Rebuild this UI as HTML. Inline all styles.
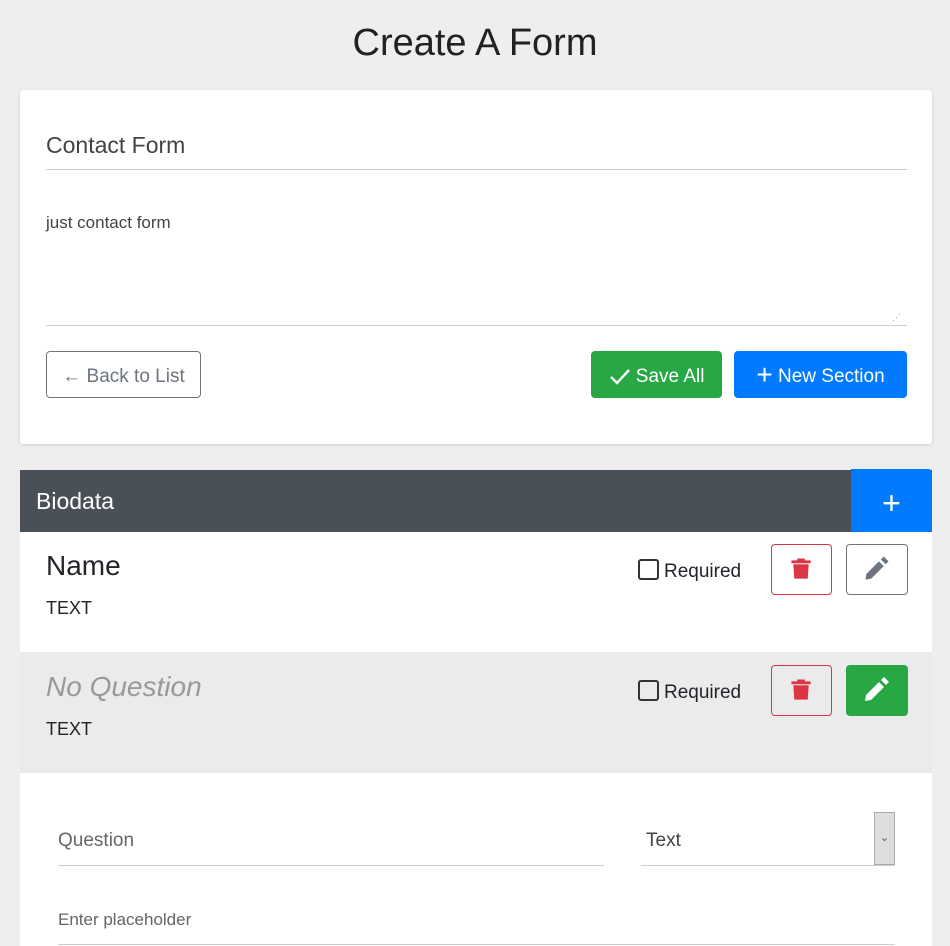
<!DOCTYPE html>
<html><head><style>
*{box-sizing:border-box;margin:0;padding:0}
body{width:950px;height:946px;background:#eeeeee;font-family:"Liberation Sans",sans-serif;color:#212529;position:relative;overflow:hidden}
.a{position:absolute}
h1{position:absolute;top:22px;left:0;width:950px;text-align:center;font-weight:400;font-size:38px;color:#222}
.card{left:20px;top:90px;width:912px;height:354px;background:#fff;border-radius:3px;box-shadow:0 1px 3px rgba(0,0,0,.15)}
.line{height:1px;background:#ccc}
.btn{display:flex;align-items:center;justify-content:center;border-radius:4px;font-size:19px;padding-top:4px}
.trash{width:61px;height:51px;border:1px solid #dc3545;border-radius:4px}
.chk{width:21px;height:21px;border:2px solid #333;border-radius:3px}
</style></head><body>
<h1>Create A Form</h1>
<div class="a card"></div>
<div class="a" style="left:46px;top:132px;font-size:23px;color:#444">Contact Form</div>
<div class="a line" style="left:46px;top:169px;width:861px"></div>
<div class="a" style="left:46px;top:213px;font-size:17px;color:#444">just contact form</div>
<div class="a line" style="left:46px;top:325px;width:861px"></div>
<div class="a" style="left:892px;top:312px;font-size:9px;color:#aaa">⋰</div>
<div class="a btn" style="left:46px;top:351px;width:155px;height:47px;border:1px solid #6c757d;color:#6c757d">← Back to List</div>
<div class="a btn" style="left:591px;top:351px;width:131px;height:47px;background:#28a745;color:#fff"><svg width="22" height="20" viewBox="0 0 22 20"><path d="M2 10l6 6L20 3" stroke="#fff" stroke-width="2.4" fill="none"/></svg>&nbsp;Save All</div>
<div class="a btn" style="left:734px;top:351px;width:173px;height:47px;background:#007bff;color:#fff"><span style="font-size:28px;line-height:1;margin-top:-4px">+</span>&nbsp;New Section</div>

<div class="a" style="left:20px;top:470px;width:912px;height:62px;background:#495057"></div>
<div class="a" style="left:36px;top:488px;font-size:23px;color:#fff">Biodata</div>
<div class="a btn" style="left:851px;top:469px;width:81px;height:63px;background:#007bff;color:#fff;border-radius:0 4px 0 0;font-size:32px;padding-top:6px">+</div>

<div class="a" style="left:20px;top:532px;width:912px;height:120px;background:#fff"></div>
<div class="a" style="left:20px;top:652px;width:912px;height:121px;background:#ebebeb"></div>
<div class="a" style="left:20px;top:773px;width:912px;height:173px;background:#fff"></div>

<div class="a" style="left:46px;top:550px;font-size:28px">Name</div>
<div class="a" style="left:46px;top:598px;font-size:18px">TEXT</div>
<div class="a" style="left:46px;top:671px;font-size:28px;color:#999;font-style:italic">No Question</div>
<div class="a" style="left:46px;top:719px;font-size:18px">TEXT</div>

<div class="a chk" style="left:638px;top:559px"></div>
<div class="a" style="left:664px;top:561px;font-size:19px">Required</div>
<div class="a chk" style="left:638px;top:680px"></div>
<div class="a" style="left:664px;top:682px;font-size:19px">Required</div>

<svg class="a trash" style="left:771px;top:544px" viewBox="0 0 61 51"><path d="M20 16h20v3H20zM26 14h8v3h-8zM22 20h16l-1 15h-14z" fill="#dc3545"/></svg>
<svg class="a trash" style="left:771px;top:665px" viewBox="0 0 61 51"><path d="M20 16h20v3H20zM26 14h8v3h-8zM22 20h16l-1 15h-14z" fill="#dc3545"/></svg>
<svg class="a" style="left:846px;top:544px;width:62px;height:51px;border:1px solid #6c757d;border-radius:4px" viewBox="0 0 62 51"><path d="M19 36l1-6 13-13 5 5-13 13zM35 15l3-3 5 5-3 3z" fill="#6c757d"/></svg>
<svg class="a" style="left:846px;top:665px;width:62px;height:51px;background:#28a745;border-radius:4px" viewBox="0 0 62 51"><path d="M19 36l1-6 13-13 5 5-13 13zM35 15l3-3 5 5-3 3z" fill="#fff"/></svg>

<div class="a" style="left:58px;top:830px;font-size:19px;color:#666">Question</div>
<div class="a line" style="left:58px;top:865px;width:546px"></div>
<div class="a" style="left:646px;top:830px;font-size:19px;color:#444">Text</div>
<div class="a line" style="left:641px;top:865px;width:254px"></div>
<div class="a" style="left:874px;top:812px;width:21px;height:53px;background:#ddd;border:1px solid #aaa;font-size:11px;color:#555;text-align:center;line-height:50px">⌄</div>
<div class="a" style="left:58px;top:910px;font-size:17px;color:#666">Enter placeholder</div>
<div class="a line" style="left:58px;top:944px;width:837px"></div>
</body></html>
